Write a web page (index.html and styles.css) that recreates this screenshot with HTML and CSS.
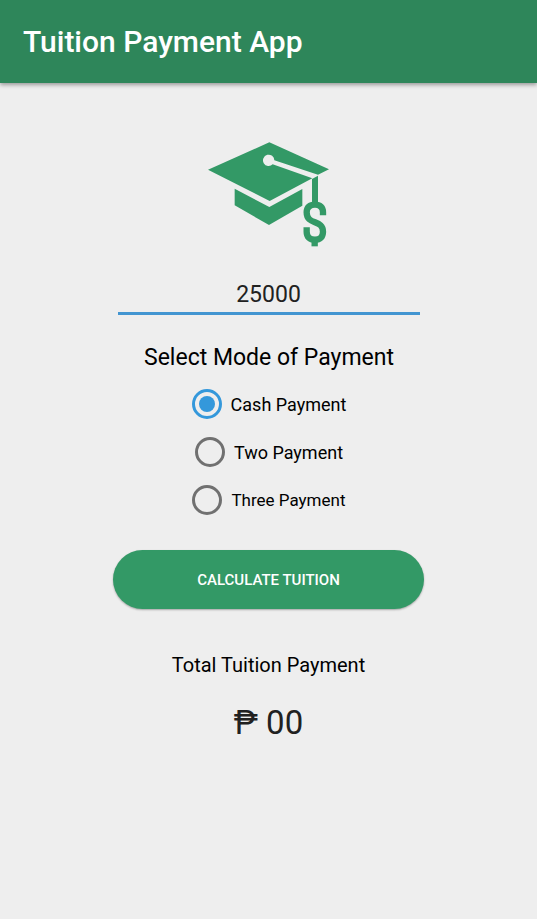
FILE: index.html
```html
<!DOCTYPE html>
<html lang="en">
<head>
<meta charset="utf-8">
<meta name="viewport" content="width=device-width, initial-scale=1">
<title>Tuition Payment App</title>
<link rel="stylesheet" href="styles.css">
</head>
<body>
<header class="app-bar">
  <h1 class="app-title">Tuition Payment App</h1>
</header>
<main class="content">
  <svg class="logo" viewBox="-4 0 450 390" aria-hidden="true">
    <path class="logo-fill" d="M38 119 222 37 401 118 368 134 237 91A17 17 0 1 0 232 103L351 145 223 213Z"/>
    <path class="logo-fill" d="M118 176 222 231 321 177V227L221 285 118 226Z"/>
    <path class="logo-fill" d="M350 147 368 137V222H350Z"/>
    <path class="logo-line" d="M383 256V247C383 232 374 224 359 224C343 224 334 232 334 247C334 287 383 267 383 305C383 321 374 329 359 329C343 329 334 321 334 305V292"/>
    <path class="logo-line" d="M358 330V349"/>
  </svg>
  <form class="form">
    <input class="amount" type="text" inputmode="numeric" value="25000" aria-label="Tuition amount">
    <fieldset class="modes">
      <legend class="modes-title">Select Mode of Payment</legend>
      <label class="mode"><input class="radio" type="radio" name="mode" checked>Cash Payment</label>
      <label class="mode"><input class="radio" type="radio" name="mode">Two Payment</label>
      <label class="mode mode-small"><input class="radio" type="radio" name="mode">Three Payment</label>
    </fieldset>
    <button class="calculate" type="button">CALCULATE TUITION</button>
  </form>
  <h2 class="total-title">Total Tuition Payment</h2>
  <output class="total">₱ 00</output>
</main>
</body>
</html>
```
FILE: styles.css
```css
* {
  box-sizing: border-box;
}

body {
  margin: 0;
  min-height: 100vh;
  background: #eeeeee;
  color: #000;
  font-family: Roboto, "Liberation Sans", sans-serif;
}

.app-bar {
  display: flex;
  align-items: center;
  padding: 24px 23px;
  background: #2e865a;
  box-shadow: 0 2px 4px rgba(0, 0, 0, 0.35);
}

.app-title {
  margin: 0;
  color: #fff;
  font-size: 30px;
  font-weight: 500;
  line-height: 35px;
}

.content {
  display: flex;
  flex-direction: column;
  align-items: center;
  padding: 47px 24px;
}

.logo {
  width: 150px;
  height: 130px;
}

.logo-fill {
  fill: #339966;
}

.logo-line {
  fill: none;
  stroke: #339966;
  stroke-width: 19px;
}

.form {
  display: flex;
  flex-direction: column;
  align-items: center;
  width: 100%;
  max-width: 311px;
}

.amount {
  width: calc(100% - 9px);
  margin: 21px 0 0;
  padding: 0 0 3px;
  border: 0;
  border-bottom: 3px solid #4295d1;
  border-radius: 0;
  outline: 0;
  background: transparent;
  color: #212121;
  font: 400 23px/28px Roboto, "Liberation Sans", sans-serif;
  text-align: center;
}

.modes {
  display: flex;
  flex-direction: column;
  align-items: center;
  margin: 29px 0 0;
  padding: 0 0 0 1px;
  border: 0;
}

.modes-title {
  padding: 0;
  font-size: 23px;
  line-height: 28px;
}

.mode {
  display: flex;
  align-items: center;
  gap: 9px;
  height: 48px;
  font-size: 18px;
}

.mode-small {
  font-size: 17px;
}

.modes-title + .mode {
  margin-top: 8px;
}

.radio {
  display: grid;
  place-items: center;
  appearance: none;
  width: 30px;
  height: 30px;
  margin: 0;
  border: 3px solid #707070;
  border-radius: 50%;
}

.radio:checked {
  border-color: #3498db;
}

.radio:checked::before {
  content: "";
  width: 16px;
  height: 16px;
  border-radius: 50%;
  background: #3498db;
}

.calculate {
  width: 100%;
  height: 59px;
  margin: 26px 0 0;
  border: 0;
  border-radius: 30px;
  background: #339966;
  box-shadow: 0 1px 2px rgba(0, 0, 0, 0.3);
  color: #fff;
  font: 500 15px/20px Roboto, "Liberation Sans", sans-serif;
}

.total-title {
  margin: 44px 0 0;
  font-size: 20px;
  font-weight: 400;
  line-height: 24px;
}

.total {
  margin-top: 26px;
  color: #212121;
  font-size: 33px;
  line-height: 40px;
}
```
